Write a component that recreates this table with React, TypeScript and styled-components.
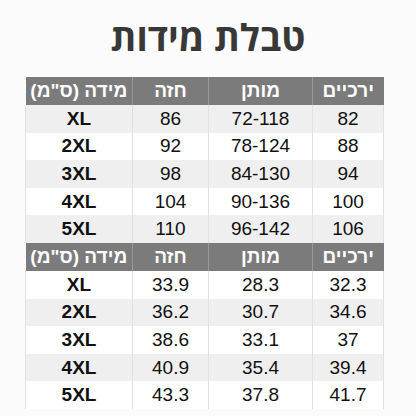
import styled, { createGlobalStyle } from 'styled-components';

type Row = { size: string; chest: string; waist: string; hips: string };

const first: Row[] = [
  { size: 'XL', chest: '86', waist: '72-118', hips: '82' },
  { size: '2XL', chest: '92', waist: '78-124', hips: '88' },
  { size: '3XL', chest: '98', waist: '84-130', hips: '94' },
  { size: '4XL', chest: '104', waist: '90-136', hips: '100' },
  { size: '5XL', chest: '110', waist: '96-142', hips: '106' },
];

const second: Row[] = [
  { size: 'XL', chest: '33.9', waist: '28.3', hips: '32.3' },
  { size: '2XL', chest: '36.2', waist: '30.7', hips: '34.6' },
  { size: '3XL', chest: '38.6', waist: '33.1', hips: '37' },
  { size: '4XL', chest: '40.9', waist: '35.4', hips: '39.4' },
  { size: '5XL', chest: '43.3', waist: '37.8', hips: '41.7' },
];

function SizeTable({ rows, stripeFirst }: { rows: Row[]; stripeFirst: boolean }) {
  return (
    <Table dir="rtl">
      <colgroup>
        <col style={{ width: 71 }} />
        <col style={{ width: 104 }} />
        <col style={{ width: 76 }} />
        <col style={{ width: 107 }} />
      </colgroup>
      <thead>
        <tr>
          <Th>ירכיים</Th>
          <Th>מותן</Th>
          <Th>חזה</Th>
          <Th>מידה (ס"מ)</Th>
        </tr>
      </thead>
      <tbody>
        {rows.map((r, i) => (
          <Tr key={r.size} $gray={(i % 2 === 0) === stripeFirst}>
            <Td>{r.hips}</Td>
            <Td>{r.waist}</Td>
            <Td>{r.chest}</Td>
            <Td $bold>{r.size}</Td>
          </Tr>
        ))}
      </tbody>
    </Table>
  );
}

export default function App() {
  return (
    <>
      <Global />
      <Page>
        <Title>טבלת מידות</Title>
        <Tables>
          <SizeTable rows={first} stripeFirst />
          <SizeTable rows={second} stripeFirst={false} />
        </Tables>
      </Page>
    </>
  );
}

const Global = createGlobalStyle`
  body {
    margin: 0;
    background: #fbfbfb;
    font-family: "Liberation Sans", Arial, sans-serif;
  }
`;

const Page = styled.div`
  width: 416px;
  height: 416px;
  overflow: hidden;
  display: flex;
  flex-direction: column;
  align-items: center;
`;

const Title = styled.h1`
  margin: 16px 0 0;
  font-family: "Open Sans", "DejaVu Sans", sans-serif;
  font-size: 37px;
  line-height: 42px;
  height: 42px;
  font-weight: 700;
  color: #383838;
  direction: rtl;
`;

const Tables = styled.div`
  margin-top: 19px;
  align-self: flex-start;
  margin-left: 25px;
  display: flex;
  flex-direction: column;
`;

const Table = styled.table`
  width: 358px;
  table-layout: fixed;
  border-collapse: collapse;
  background: #fff;
`;

const Th = styled.th`
  height: 28px;
  padding: 0;
  background: #7b7b7b;
  color: #fff;
  font-size: 19px;
  line-height: 22px;
  font-weight: 700;
  text-align: center;
  border-left: 1px solid #9a9a9a;
  &:last-child {
    border-left: none;
  }
`;

const Tr = styled.tr<{ $gray: boolean }>`
  background: ${(p) => (p.$gray ? '#efefef' : '#ffffff')};
`;

const Td = styled.td<{ $bold?: boolean }>`
  height: 27.6px;
  padding: 0;
  text-align: center;
  font-size: 19px;
  line-height: 22px;
  font-weight: ${(p) => (p.$bold ? 700 : 400)};
  color: #111;
  border: 1px solid #e0e0e0;
  border-top: none;
  border-bottom: none;
`;
